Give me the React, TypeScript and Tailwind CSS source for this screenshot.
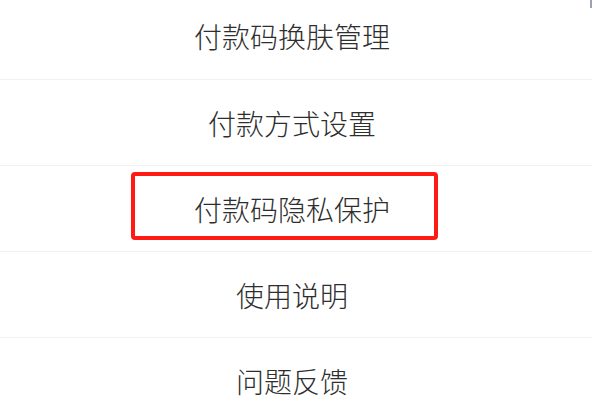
import React from "react";

const items = [
  "付款码换肤管理",
  "付款方式设置",
  "付款码隐私保护",
  "使用说明",
  "问题反馈",
];

export default function App() {
  return (
    <div
      className="relative w-[600px] h-[410px] overflow-hidden bg-white"
      style={{ fontFamily: '"Noto Sans CJK SC", "Noto Sans", sans-serif' }}
    >
      <div className="absolute left-[590px] top-0 w-[2px] h-[8px] bg-[#9aa3ad]" />
      <div className="w-[592px] -mt-[7px] flex flex-col">
        {items.map((t, i) => (
          <div
            key={t}
            className={
              "relative h-[86px] pr-[8px] flex items-center justify-center " +
              (i > 0 ? "border-t border-[#f1f1f1]" : "")
            }
          >
            <span className="text-[28px] leading-none font-light text-[#2e2e2e]">
              {t}
            </span>
            {i === 2 && (
              <div className="absolute left-[131px] top-[6px] w-[307px] h-[68px] border-[4px] border-[#ff1a14] rounded-[4px]" />
            )}
          </div>
        ))}
      </div>
    </div>
  );
}
